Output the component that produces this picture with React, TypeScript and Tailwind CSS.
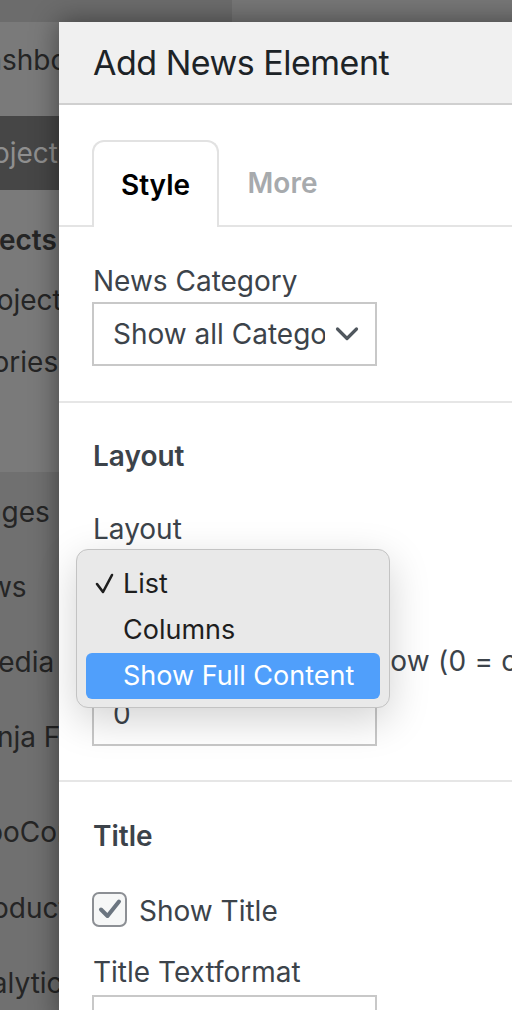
import React from "react";

const font = { fontFamily: '"Inter", "Noto Sans", sans-serif' };

function SideItem({ label, offset, h, bold, className = "" }: { label: string; offset: string; h: string; bold?: boolean; className?: string }) {
  return (
    <div className={`flex items-center whitespace-nowrap shrink-0 ${h} ${className}`}>
      <span className={`${offset} ${bold ? "font-semibold" : ""}`}>{label}</span>
    </div>
  );
}

export default function App() {
  return (
    <div className="relative w-[512px] h-[1010px] overflow-hidden bg-[#777777] text-[28px] text-[#252525]" style={font}>
      {/* background admin */}
      <div className="flex h-full">
        <div className="w-[232px] flex flex-col bg-[#7a7a7a] overflow-hidden">
          <div className="h-[22px] bg-[#6c6c6c] shrink-0" />
          <SideItem label="Dashboard" offset="ml-[-34px]" h="h-[76px]" />
          <div className="h-[18px] shrink-0" />
          <SideItem label="Projects" offset="ml-[-35px]" h="h-[74px]" className="bg-[#464646] text-[#8f8f8f]" />
          <div className="h-[20px] shrink-0" />
          <SideItem label="Projects" offset="ml-[-54px]" h="h-[60px]" bold />
          <SideItem label="All Projects" offset="ml-[-72px]" h="h-[60px]" />
          <SideItem label="Categories" offset="ml-[-86px]" h="h-[64px]" />
          <div className="flex flex-col bg-[#707070] mt-[78px] shrink-0">
            <SideItem label="Pages" offset="ml-[-32px]" h="h-[80px]" />
            <SideItem label="News" offset="ml-[-48px]" h="h-[70px]" />
            <SideItem label="Media" offset="ml-[-27px]" h="h-[80px]" />
            <SideItem label="Ninja Forms" offset="ml-[-31px]" h="h-[70px]" />
            <SideItem label="WooCommerce" offset="ml-[-40px]" h="h-[120px]" />
            <SideItem label="Products" offset="ml-[-36px]" h="h-[32px]" />
            <SideItem label="Analytics" offset="ml-[-44px]" h="h-[118px]" />
          </div>
        </div>
        <div className="flex-1 bg-[#777777]" />
      </div>

      {/* modal panel */}
      <div className="absolute left-[59px] top-[22px] w-[640px] h-[1000px] bg-white shadow-[0_0_26px_rgba(0,0,0,0.45)] text-[#3c434a]">
        <div className="h-[83px] bg-[#f0f0f0] border-b-2 border-[#d0d0d0] flex items-center pl-[34px]">
          <h1 className="text-[34px] tracking-[-0.5px] text-[#1d2327]">Add News Element</h1>
        </div>

        <div className="mt-[35px] flex items-end border-b-2 border-[#e4e4e4] pl-[33px]">
          <div className="w-[127px] h-[87px] -mb-[2px] border-2 border-b-0 border-[#e2e2e2] rounded-t-[12px] bg-white flex items-center justify-center font-semibold text-black">
            Style
          </div>
          <div className="w-[127px] h-[85px] flex items-center justify-center font-semibold text-[#a7aaad]">
            More
          </div>
        </div>

        {/* News Category */}
        <div className="pl-[33px] pt-[37px] pb-[35px] border-b-2 border-[#e6e6e6]">
          <div className="leading-[34px] pl-[1px]">News Category</div>
          <div className="mt-[4px] w-[285px] h-[64px] border-2 border-[#c8c8c8] flex items-center pl-[19px] pr-[16px]">
            <span className="flex-1 overflow-hidden whitespace-nowrap">Show all Categories</span>
            <svg width="24" height="16" viewBox="0 0 24 16" className="ml-[10px] shrink-0">
              <path d="M2.5 3 L12 12.5 L21.5 3" fill="none" stroke="#50575e" strokeWidth="3.2" strokeLinecap="round" strokeLinejoin="round" />
            </svg>
          </div>
        </div>

        {/* Layout */}
        <div className="pl-[33px] pt-[36px] pb-[34px] border-b-2 border-[#e6e6e6]">
          <div className="leading-[34px] pl-[1px] font-semibold">Layout</div>
          <div className="mt-[39px] leading-[34px] pl-[1px]">Layout</div>
          <div className="mt-[4px] w-[285px] h-[64px] border-2 border-[#c8c8c8] flex items-center pl-[19px]">
            List
          </div>
          <div className="mt-[30px] leading-[34px] pl-[1px] whitespace-nowrap tracking-[0.2px]">Number of items to show (0 = off)</div>
          <div className="mt-[4px] w-[285px] h-[64px] border-2 border-[#c8c8c8] flex items-center pl-[19px]">
            0
          </div>
        </div>

        {/* Title */}
        <div className="pl-[33px] pt-[37px]">
          <div className="leading-[34px] pl-[1px] font-semibold">Title</div>
          <div className="mt-[37px] flex items-center gap-[12px]">
            <div className="w-[35px] h-[35px] rounded-[7px] border-2 border-[#8c8f94] bg-[#f6f7f7] flex items-center justify-center">
              <svg width="24" height="22" viewBox="0 0 24 22">
                <path d="M3 11.5 L9.5 18 L21 3.5" fill="none" stroke="#6b7580" strokeWidth="4" strokeLinecap="round" strokeLinejoin="round" />
              </svg>
            </div>
            <span className="leading-[34px] mt-[4px]">Show Title</span>
          </div>
          <div className="mt-[27px] leading-[34px] pl-[1px]">Title Textformat</div>
          <div className="mt-[6px] w-[285px] h-[64px] border-2 border-[#c8c8c8]" />
        </div>
      </div>

      {/* native dropdown menu */}
      <div className="absolute left-[76px] top-[549px] w-[314px] h-[159px] rounded-[12px] bg-[#e9e9e9] border border-[#c3c3c3] shadow-[0_12px_40px_rgba(0,0,0,0.18)] pt-[11px] px-[9px] text-[27px] text-[#1e1e1e]">
        <div className="h-[46px] flex items-center relative pl-[37px]">
          <svg width="20" height="22" viewBox="0 0 20 22" className="absolute left-[9px] top-[12px]">
            <path d="M2 11 L8 19 L17 2" fill="none" stroke="#1e1e1e" strokeWidth="2.6" strokeLinecap="round" strokeLinejoin="round" />
          </svg>
          List
        </div>
        <div className="h-[46px] flex items-center pl-[37px]">Columns</div>
        <div className="h-[46px] flex items-center pl-[37px] rounded-[6px] bg-[#509ffb] text-white">Show Full Content</div>
      </div>
    </div>
  );
}
